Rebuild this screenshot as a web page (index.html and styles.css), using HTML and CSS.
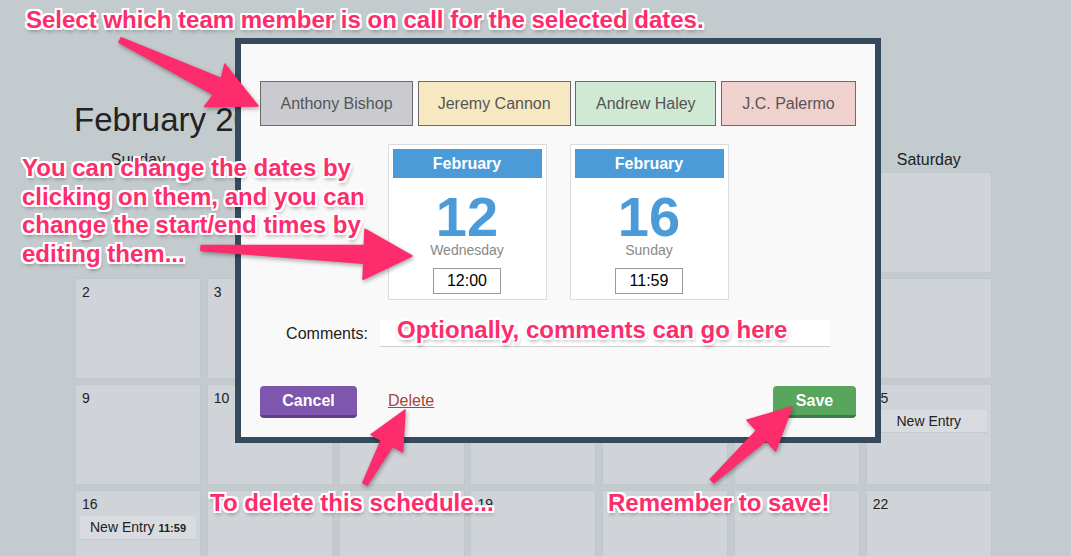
FILE: index.html
```html
<!DOCTYPE html>
<html>
<head>
<meta charset="utf-8">
<link rel="stylesheet" href="styles.css">
</head>
<body>
<div class="calendar">
  <h1 class="title">February 2014</h1>
  <div class="weekdays">
    <div>Sunday</div><div>Monday</div><div>Tuesday</div><div>Wednesday</div><div>Thursday</div><div>Friday</div><div>Saturday</div>
  </div>
  <div class="grid">
    <div class="cell empty"></div><div class="cell empty"></div><div class="cell empty"></div><div class="cell empty"></div><div class="cell empty"></div><div class="cell empty"></div>
    <div class="cell"><div class="num">1</div></div>
    <div class="cell"><div class="num">2</div></div>
    <div class="cell"><div class="num">3</div></div>
    <div class="cell"><div class="num">4</div></div>
    <div class="cell"><div class="num">5</div></div>
    <div class="cell"><div class="num">6</div></div>
    <div class="cell"><div class="num">7</div></div>
    <div class="cell"><div class="num">8</div></div>
    <div class="cell"><div class="num">9</div></div>
    <div class="cell"><div class="num">10</div></div>
    <div class="cell"><div class="num">11</div></div>
    <div class="cell"><div class="num">12</div></div>
    <div class="cell"><div class="num">13</div></div>
    <div class="cell"><div class="num">14</div></div>
    <div class="cell"><div class="num">15</div><div class="entry">New Entry</div></div>
    <div class="cell"><div class="num">16</div><div class="entry">New Entry <b>11:59</b></div></div>
    <div class="cell"><div class="num">17</div></div>
    <div class="cell"><div class="num">18</div></div>
    <div class="cell"><div class="num">19</div></div>
    <div class="cell"><div class="num">20</div></div>
    <div class="cell"><div class="num">21</div></div>
    <div class="cell"><div class="num">22</div></div>
  </div>
</div>

<div class="modal">
  <div class="people">
    <div class="person p-gray">Anthony Bishop</div>
    <div class="person p-yellow">Jeremy Cannon</div>
    <div class="person p-green">Andrew Haley</div>
    <div class="person p-red">J.C. Palermo</div>
  </div>
  <div class="dates">
    <div class="datecard">
      <div class="month">February</div>
      <div class="daynum">12</div>
      <div class="weekday">Wednesday</div>
      <div class="time">12:00</div>
    </div>
    <div class="datecard">
      <div class="month">February</div>
      <div class="daynum">16</div>
      <div class="weekday">Sunday</div>
      <div class="time">11:59</div>
    </div>
  </div>
  <div class="comments">
    <span class="clabel">Comments:</span>
    <div class="cinput"></div>
  </div>
  <div class="actions">
    <div class="btn cancel">Cancel</div>
    <span class="delete">Delete</span>
    <span class="spacer"></span>
    <div class="btn save">Save</div>
  </div>
</div>

<svg class="arrows" width="1071" height="556" viewBox="0 0 1071 556">
  <polygon points="121.1,37.8 221.3,78.5 224.8,64.1 258,106 204.6,106.5 213.5,94.7 118.9,42.3"/>
  <polygon points="201.1,245.5 364.3,245.2 365,229.2 412,256 363,279.2 363.7,263.2 200.9,250.5"/>
  <polygon points="362.8,482.8 381.1,440.2 371,434.7 405,410 402.6,451.9 392.5,446.4 367.2,485.2"/>
  <polygon points="710.3,479.2 756.4,430.4 746.9,420.1 792,407 775.5,450.9 766,440.6 713.7,482.8"/>
</svg>

<div class="note note-select">Select which team member is on call for the selected dates.</div>
<div class="note note-dates">You can change the dates by<br>clicking on them, and you can<br>change the start/end times by<br>editing them...</div>
<div class="note note-comments">Optionally, comments can go here</div>
<div class="note note-delete">To delete this schedule...</div>
<div class="note note-save">Remember to save!</div>
</body>
</html>
```

FILE: styles.css
```css
html, body {
  margin: 0;
  padding: 0;
}
body {
  width: 1071px;
  height: 556px;
  overflow: hidden;
  position: relative;
  background: #c4cbcf;
  font-family: "Liberation Sans", Arial, Helvetica, sans-serif;
  color: #222;
}

/* calendar */
.calendar {
  padding: 100px 0 0 75px;
}
.title {
  margin: 0 0 0 -1px;
  font-size: 33px;
  line-height: 40px;
  font-weight: normal;
  color: #222;
}
.weekdays {
  display: grid;
  grid-template-columns: repeat(7, 126px);
  column-gap: 5.8px;
  margin-top: 10px;
  font-size: 16px;
  line-height: 20px;
  text-align: center;
  color: #222;
}
.grid {
  display: grid;
  grid-template-columns: repeat(7, 126px);
  grid-auto-rows: 101px;
  column-gap: 5.8px;
  row-gap: 5.3px;
  margin-top: 1.5px;
}
.cell {
  box-sizing: border-box;
  background: #d0d4d9;
  border: 1px solid #c1c8cc;
  padding-top: 5px;
}
.cell.empty {
  background: none;
  border: none;
}
.num {
  padding-left: 6px;
  font-size: 14px;
  line-height: 16px;
  color: #222;
}
.entry {
  margin: 4px 4px 0;
  background: #d8dbdf;
  border-bottom: 1px solid #c3c9cd;
  text-align: center;
  font-size: 14px;
  line-height: 22px;
  color: #222;
}
.entry b {
  font-size: 11px;
}

/* modal */
.modal {
  position: absolute;
  left: 235px;
  top: 38px;
  width: 646px;
  height: 405px;
  box-sizing: border-box;
  border: 6px solid #364a5e;
  background: #f9f9f9;
  padding-top: 37px;
}
.people {
  display: flex;
  justify-content: space-between;
  padding: 0 19px;
}
.person {
  box-sizing: border-box;
  height: 45px;
  line-height: 43px;
  border: 1px solid #6b6b6b;
  text-align: center;
  font-size: 16px;
  color: #555;
}
.p-gray { width: 153px; background: #c9cbd0; }
.p-yellow { width: 153px; background: #f6e9c1; }
.p-green { width: 141px; background: #cfe9d5; }
.p-red { width: 135px; background: #f0d1cd; }

.dates {
  display: flex;
  justify-content: center;
  gap: 23px;
  margin-top: 18px;
}
.datecard {
  box-sizing: border-box;
  width: 159px;
  height: 156px;
  border: 1px solid #dcdcdc;
  background: #fff;
  padding: 4px;
  text-align: center;
}
.month {
  height: 29px;
  line-height: 29px;
  background: #4a9bd8;
  color: #fff;
  font-weight: bold;
  font-size: 16px;
}
.daynum {
  margin-top: 14px;
  font-size: 56px;
  line-height: 50px;
  font-weight: bold;
  color: #4a9bd8;
}
.weekday {
  font-size: 14px;
  line-height: 16px;
  color: #888;
}
.time {
  box-sizing: border-box;
  width: 68px;
  height: 26px;
  margin: 10px auto 0;
  border: 1px solid #9a9a9a;
  background: #fff;
  font-size: 16px;
  line-height: 24px;
  color: #000;
}

.comments {
  display: flex;
  justify-content: center;
  align-items: center;
  gap: 12px;
  margin-top: 20px;
}
.clabel {
  font-size: 16px;
  line-height: 20px;
  color: #222;
}
.cinput {
  box-sizing: border-box;
  width: 450px;
  height: 27px;
  background: #fff;
  border-bottom: 1px solid #cfcfcf;
}

.actions {
  display: flex;
  align-items: flex-start;
  margin-top: 39px;
  padding: 0 19px;
}
.btn {
  box-sizing: border-box;
  height: 32px;
  line-height: 29px;
  border-radius: 4px;
  color: #fff;
  font-weight: bold;
  font-size: 16px;
  text-align: center;
}
.cancel {
  width: 97px;
  background: #7e56ae;
  border-bottom: 3px solid #5e3f88;
}
.save {
  width: 83px;
  background: #58a55e;
  border-bottom: 3px solid #3e7a43;
}
.delete {
  margin-left: 31px;
  font-size: 16px;
  line-height: 29px;
  color: #a8453b;
  text-decoration: underline;
}
.spacer {
  flex: 1;
}

/* annotations */
.arrows {
  position: absolute;
  left: 0;
  top: 0;
  pointer-events: none;
  filter: drop-shadow(1px 2px 2px rgba(0, 0, 0, 0.35));
}
.arrows polygon {
  fill: #fd2c6c;
  stroke: #fd2c6c;
  stroke-width: 1.5;
  stroke-linejoin: round;
}
.note {
  position: absolute;
  white-space: nowrap;
  font-family: "Liberation Sans", Arial, sans-serif;
  font-weight: bold;
  font-size: 24px;
  line-height: 28.5px;
  color: #fd2c6c;
  text-shadow:
    -2px -2px 0 #fff, 0 -2px 0 #fff, 2px -2px 0 #fff, 2px 0 0 #fff,
    2px 2px 0 #fff, 0 2px 0 #fff, -2px 2px 0 #fff, -2px 0 0 #fff,
    1px 3px 4px rgba(0, 0, 0, 0.45);
}
.note-select { left: 26px; top: 6px; }
.note-dates { left: 22px; top: 154px; }
.note-comments { left: 397px; top: 316px; }
.note-delete { left: 210px; top: 489px; }
.note-save { left: 608px; top: 489px; }
```
